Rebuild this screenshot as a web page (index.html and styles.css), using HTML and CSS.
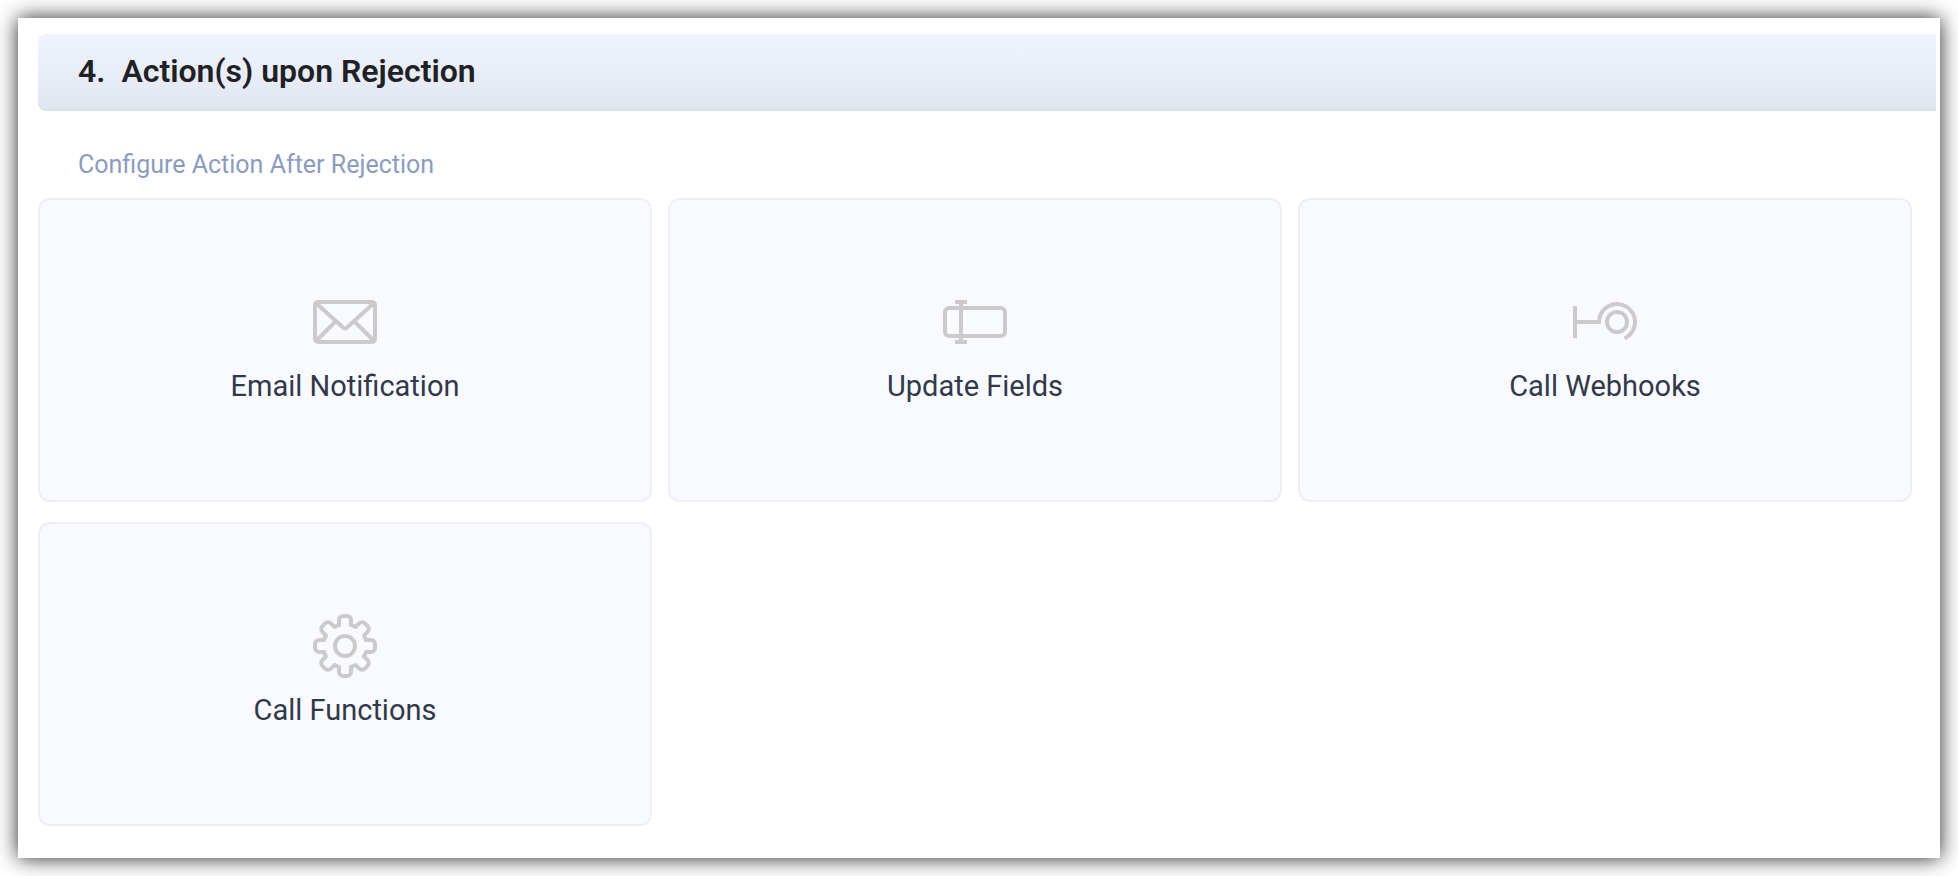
FILE: index.html
```html
<!DOCTYPE html>
<html lang="en">
<head>
    <meta charset="UTF-8">
    <title>Action(s) upon Rejection</title>
    <meta name="viewport" content="width=device-width, initial-scale=1">
    <link rel="stylesheet" href="styles.css">
</head>
<body>
<main class="panel">
    <header class="step-header">
        <h1 class="step-title"><span class="step-number">4.</span>Action(s) upon Rejection</h1>
    </header>
    <section class="step-body">
        <h2 class="step-subtitle">Configure Action After Rejection</h2>
        <div class="action-grid">
            <button type="button" class="action-card">
                <svg class="action-icon" viewBox="0 0 64 64" aria-hidden="true">
                    <rect x="2" y="12" width="60" height="40" rx="3"/>
                    <path d="M3 13L30 37.500Q32 39.500 34 37.500L61 13M3 51L22 32M61 51L42 32"/>
                </svg>
                <span class="action-label">Email Notification</span>
            </button>
            <button type="button" class="action-card">
                <svg class="action-icon" viewBox="0 0 64 64" aria-hidden="true">
                    <rect x="2" y="18" width="60" height="28" rx="4"/>
                    <path d="M12 12H24M18 12V52M12 52H24"/>
                </svg>
                <span class="action-label">Update Fields</span>
            </button>
            <button type="button" class="action-card">
                <svg class="action-icon" viewBox="0 0 64 64" aria-hidden="true">
                    <path d="M2 16V48M2 32H28"/>
                    <path d="M26 34V32A18 18 0 1 1 51.500 48.400"/>
                    <circle cx="44" cy="32" r="10"/>
                </svg>
                <span class="action-label">Call Webhooks</span>
            </button>
            <button type="button" class="action-card">
                <svg class="action-icon" viewBox="-32 -32 64 64" aria-hidden="true">
                    <defs>
                        <path id="tooth" stroke-linecap="round" stroke-linejoin="round"
                              d="M-6 -21V-26a4 4 0 0 1 4 -4h4a4 4 0 0 1 4 4V-21L10.600 -19.100"/>
                    </defs>
                    <use href="#tooth"/>
                    <use href="#tooth" transform="rotate(45)"/>
                    <use href="#tooth" transform="rotate(90)"/>
                    <use href="#tooth" transform="rotate(135)"/>
                    <use href="#tooth" transform="rotate(180)"/>
                    <use href="#tooth" transform="rotate(225)"/>
                    <use href="#tooth" transform="rotate(270)"/>
                    <use href="#tooth" transform="rotate(315)"/>
                    <circle r="10"/>
                </svg>
                <span class="action-label">Call Functions</span>
            </button>
        </div>
    </section>
</main>
</body>
</html>
```
FILE: styles.css
```css
* {
    box-sizing: border-box;
    margin: 0;
    padding: 0;
}

body {
    padding: 18px;
    background: #fff;
    font-family: Roboto, "Liberation Sans", sans-serif;
}

.panel {
    padding: 16px 4px 32px 20px;
    background: #fff;
    box-shadow: 0 0 20px rgba(0, 0, 0, 0.85);
}

.step-header {
    padding: 18px 40px;
    border-bottom: 2px solid #d8e1ee;
    border-radius: 8px 0 0 8px;
    background: linear-gradient(#eff4ff, #e2e6f1);
}

.step-title {
    display: flex;
    gap: 16px;
    color: #202124;
    font-size: 32px;
    font-weight: 600;
    line-height: 39px;
}

.step-body {
    padding: 36px 24px 0 0;
}

.step-subtitle {
    padding: 0 40px;
    color: #8c9cbe;
    font-size: 25px;
    font-weight: 400;
    line-height: 36px;
}

.action-grid {
    display: grid;
    grid-template-columns: repeat(3, 1fr);
    gap: 20px 16px;
    margin-top: 15px;
}

.action-card {
    display: flex;
    flex-direction: column;
    align-items: center;
    gap: 14px;
    padding: 90px 20px 96px;
    border: 2px solid #eeeff4;
    border-radius: 12px;
    background: #f9faff;
    color: #313949;
    font-family: inherit;
    font-size: 29px;
    line-height: 36px;
    cursor: pointer;
}

.action-card:hover {
    border-color: #d8e1ee;
}

.action-icon {
    width: 64px;
    height: 64px;
    fill: none;
    stroke: #cbcbcb;
    stroke-width: 4;
}
```
